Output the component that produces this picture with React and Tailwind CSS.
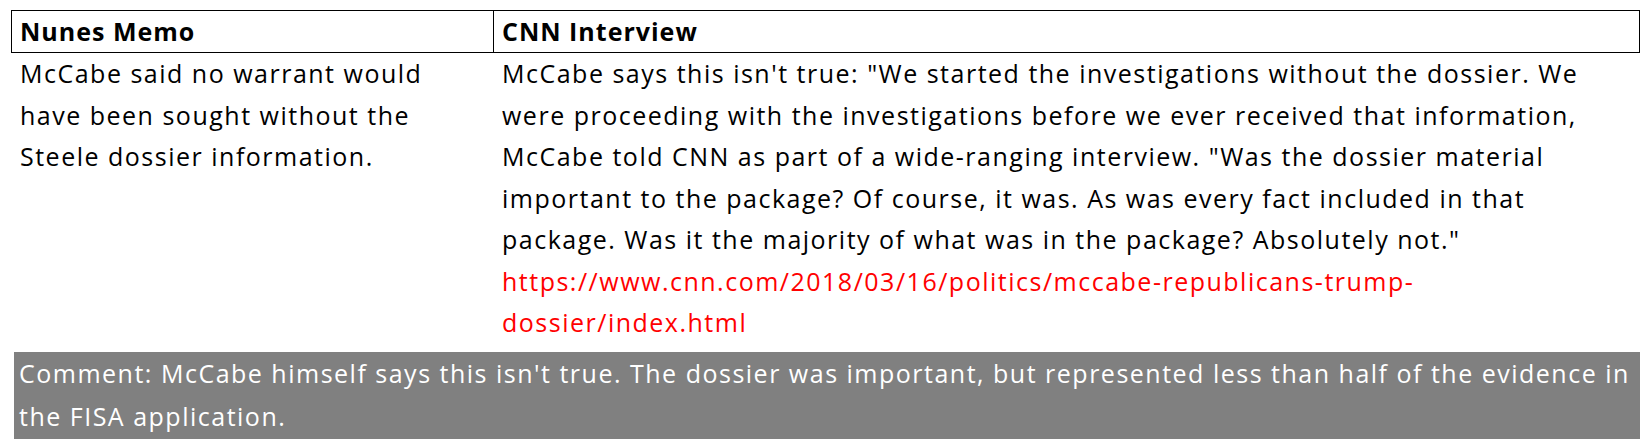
const cnnLines = [
  'McCabe says this isn\'t true: "We started the investigations without the dossier. We',
  'were proceeding with the investigations before we ever received that information,',
  'McCabe told CNN as part of a wide-ranging interview. "Was the dossier material',
  'important to the package? Of course, it was. As was every fact included in that',
  'package. Was it the majority of what was in the package? Absolutely not."',
];

const memoLines = [
  'McCabe said no warrant would',
  'have been sought without the',
  'Steele dossier information.',
];

const App = () => {
  return (
    <div className="w-[1650px] h-[448px] bg-white text-black font-['Open_Sans','Liberation_Sans',sans-serif] text-[25px] tracking-[1.5px] leading-[41.5px] pt-[10px] pl-[11px] pr-[10px] overflow-hidden">
      {/* header row */}
      <div className="grid grid-cols-[482px_1fr] border border-black h-[43px] font-bold leading-[41px] tracking-[1px]">
        <div className="border-r border-black pl-[8px]">Nunes Memo</div>
        <div className="pl-[8px]">CNN Interview</div>
      </div>

      {/* body row */}
      <div className="grid grid-cols-[483px_1fr]">
        <div className="pl-[9px] whitespace-nowrap">
          {memoLines.map((l) => (
            <div key={l}>{l}</div>
          ))}
        </div>
        <div className="pl-[8px] whitespace-nowrap">
          {cnnLines.map((l) => (
            <div key={l}>{l}</div>
          ))}
          <div className="text-[#ff0000]">https://www.cnn.com/2018/03/16/politics/mccabe-republicans-trump-</div>
          <div className="text-[#ff0000]">dossier/index.html</div>
        </div>
      </div>

      {/* comment band */}
      <div className="mt-[8px] ml-[3px] bg-[#808080] text-white leading-[43px] pl-[5px] h-[87px] whitespace-nowrap">
        <div>Comment: McCabe himself says this isn't true. The dossier was important, but represented less than half of the evidence in</div>
        <div>the FISA application.</div>
      </div>
    </div>
  );
};

export default App;
